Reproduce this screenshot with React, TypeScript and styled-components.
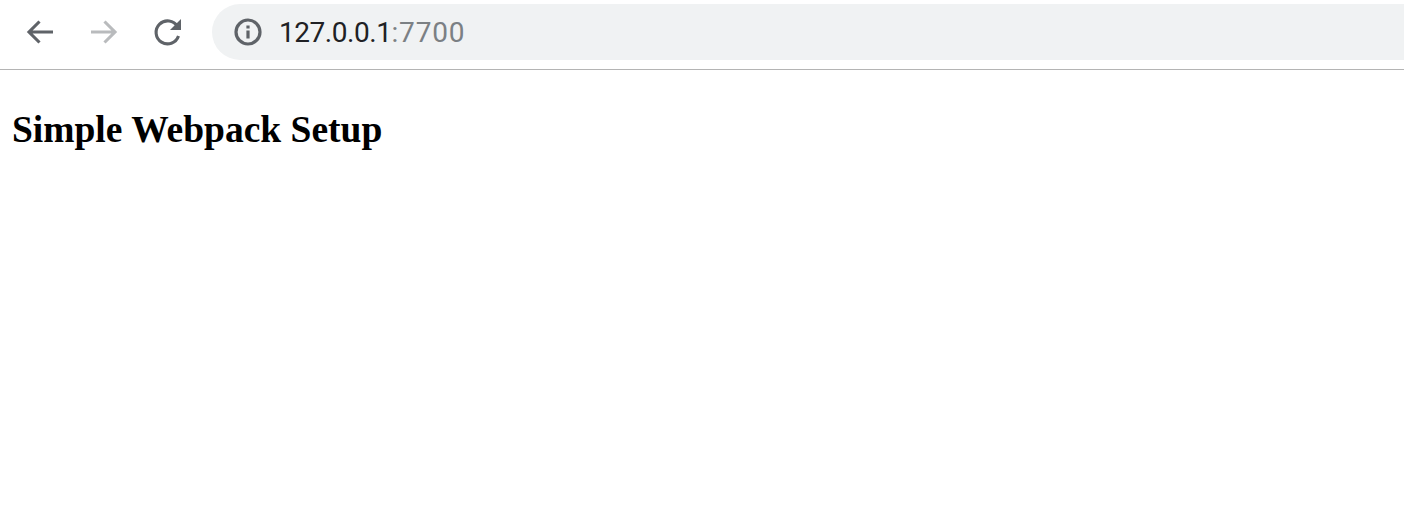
import React from 'react';
import styled, { createGlobalStyle } from 'styled-components';

const GlobalStyle = createGlobalStyle`
  html, body {
    margin: 0;
    padding: 0;
    background: #ffffff;
    overflow: hidden;
  }
`;

const Toolbar = styled.div`
  height: 70px;
  display: flex;
  align-items: center;
  box-sizing: border-box;
  padding: 4px 0 9px;
  border-bottom: 1px solid #b4b4b4;
`;

const NavGroup = styled.div`
  display: flex;
  align-items: center;
  gap: 32px;
  padding-left: 24px;
`;

const NavIcon = styled.svg<{ $faded?: boolean }>`
  width: 32px;
  height: 32px;
  display: block;
  fill: none;
  stroke: ${(p) => (p.$faded ? '#b9bbbd' : '#5f6368')};
  stroke-width: 3.1;
`;

const AddressBar = styled.div`
  flex: 1;
  height: 56px;
  margin-left: 28px;
  margin-right: -40px;
  padding-left: 22px;
  display: flex;
  align-items: center;
  gap: 17px;
  background: #f0f2f3;
  border-radius: 28px;
`;

const Url = styled.div`
  font-family: 'Roboto', 'Liberation Sans', sans-serif;
  font-size: 28px;
  letter-spacing: -0.45px;
  color: #202124;
`;

const Port = styled.span`
  letter-spacing: 0.8px;
  color: #7b8084;
`;

const Page = styled.main`
  padding: 0 12px;
`;

const Heading = styled.h1`
  margin: 37px 0 0;
  font-family: 'Liberation Serif', 'Times New Roman', serif;
  font-size: 37.5px;
  line-height: 46px;
  font-weight: 700;
  color: #000000;
`;

const App: React.FC = () => (
  <>
    <GlobalStyle />
    <Toolbar>
      <NavGroup>
        <NavIcon viewBox="0 0 32 32">
          <path d="M29 16H5.5M15.5 5.5 5 16l10.5 10.5" />
        </NavIcon>
        <NavIcon viewBox="0 0 32 32" $faded>
          <path d="M3 16h23.5M16.5 5.5 27 16 16.5 26.5" />
        </NavIcon>
        <NavIcon viewBox="0 0 32 32">
          <path d="M26.5 20a11.5 11.5 0 1 1-1-9.5" />
          <path d="M29 3v11H18z" fill="#5f6368" stroke="none" />
        </NavIcon>
      </NavGroup>
      <AddressBar>
        <svg width="28" height="28" viewBox="0 0 28 28">
          <circle cx="14" cy="14" r="12" fill="none" stroke="#5f6368" strokeWidth="3.2" />
          <rect x="12.4" y="12.5" width="3.2" height="8" fill="#5f6368" />
          <rect x="12.4" y="7.5" width="3.2" height="3" fill="#5f6368" />
        </svg>
        <Url>
          127.0.0.1<Port>:7700</Port>
        </Url>
      </AddressBar>
    </Toolbar>
    <Page>
      <Heading>Simple Webpack Setup</Heading>
    </Page>
  </>
);

export default App;
